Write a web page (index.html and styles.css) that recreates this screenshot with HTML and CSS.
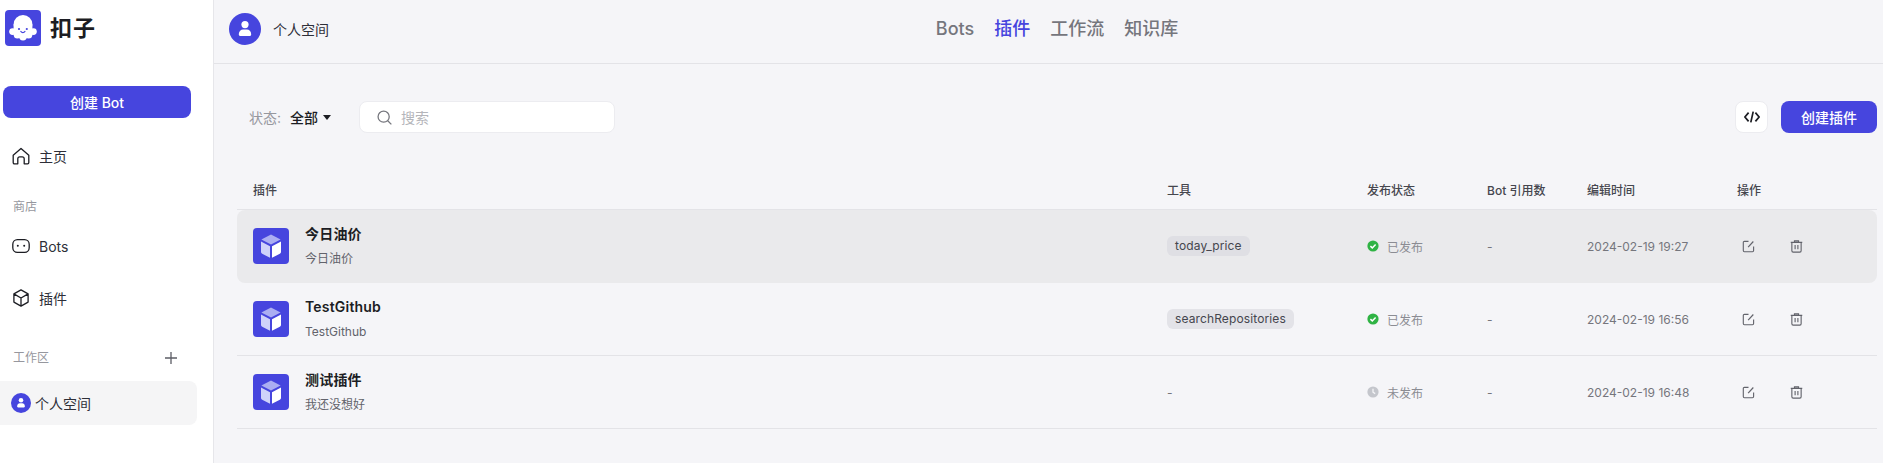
FILE: index.html
```html
<!DOCTYPE html>
<html lang="zh-CN">
<head>
<meta charset="utf-8">
<title>扣子</title>
<link rel="stylesheet" href="styles.css">
</head>
<body>
<svg class="defs" width="0" height="0" aria-hidden="true">
  <symbol id="cube" viewBox="0 0 36 36">
    <rect width="36" height="36" rx="4" fill="#4645de"/>
    <path d="M18 6.6 27.6 11.6 18 16.6 8.4 11.6Z" fill="#abaef2"/>
    <path d="M8 13.6 17 18.2V29.8L9.2 25.8C8.4 25.4 8 24.7 8 23.9Z" fill="#cfd2fa"/>
    <path d="M28 13.6 19 18.2V29.8L26.8 25.8C27.6 25.4 28 24.7 28 23.9Z" fill="#fff"/>
  </symbol>
  <symbol id="edit" viewBox="0 0 14 14">
    <path d="M7 1.5H2.6C1.9 1.5 1.4 2 1.4 2.7V11.4C1.4 12.1 1.9 12.6 2.6 12.6H11.3C12 12.6 12.5 12.1 12.5 11.4V7" fill="none" stroke="currentColor" stroke-width="1.2"/>
    <path d="M6.6 7.6 12.2 1.6" fill="none" stroke="currentColor" stroke-width="1.3"/>
  </symbol>
  <symbol id="trash" viewBox="0 0 14 14">
    <path d="M.8 2.6H13.2M4.8 2.4V1H9.2V2.4" fill="none" stroke="currentColor" stroke-width="1.2"/>
    <path d="M2 2.6V11.6C2 12.4 2.6 13 3.4 13H10.6C11.4 13 12 12.4 12 11.6V2.6" fill="none" stroke="currentColor" stroke-width="1.2"/>
    <path d="M5.5 5.4V10M8.5 5.4V10" fill="none" stroke="currentColor" stroke-width="1.2"/>
  </symbol>
  <symbol id="ok" viewBox="0 0 12 12">
    <circle cx="6" cy="6" r="5.6" fill="#2fb344"/>
    <path d="M3.4 6.1 5.3 7.9 8.6 4.4" fill="none" stroke="#fff" stroke-width="1.5"/>
  </symbol>
  <symbol id="clock" viewBox="0 0 12 12">
    <circle cx="6" cy="6" r="5.6" fill="#c4c6cc"/>
    <path d="M6 2.8V6.2L8.2 7.6" fill="none" stroke="#f5f5f8" stroke-width="1.3"/>
  </symbol>
  <symbol id="user" viewBox="0 0 32 32">
    <circle cx="16" cy="16" r="16" fill="#4645de"/>
    <circle cx="16" cy="11.6" r="3.6" fill="#fff"/>
    <path d="M9.8 21.2C9.8 18 12 16.4 14 16.4H18C20 16.4 22.2 18 22.2 21.2 22.2 22.4 21.6 23 20.6 23H11.4C10.4 23 9.8 22.4 9.8 21.2Z" fill="#fff"/>
  </symbol>
</svg>

<div class="app">
  <aside class="sidebar">
    <div class="brand">
      <svg class="brand-logo" viewBox="0 0 36 36" aria-hidden="true">
        <rect width="36" height="36" rx="4" fill="#4645de"/>
        <g fill="#fff">
          <circle cx="18" cy="14.4" r="9.4"/>
          <rect x="8.6" y="14.4" width="18.8" height="11"/>
          <circle cx="7.6" cy="21.6" r="3.4"/>
          <circle cx="28.4" cy="21.6" r="3.4"/>
          <circle cx="12.4" cy="25" r="3.6"/>
          <circle cx="18" cy="26.8" r="3.8"/>
          <circle cx="23.6" cy="25" r="3.6"/>
        </g>
        <circle cx="14" cy="19" r="1.1" fill="#4645de"/>
        <circle cx="21.8" cy="19" r="1.1" fill="#4645de"/>
        <path d="M15.8 21.4C16.8 23 19 23 20 21.4" fill="none" stroke="#4645de" stroke-width="1.1" stroke-linecap="round"/>
      </svg>
      <span class="brand-name">扣子</span>
    </div>
    <button class="btn btn-wide">创建 Bot</button>
    <a class="side-item first">
      <svg class="side-icon" viewBox="0 0 18 18"><path d="M1.2 8.2 9 1.4 16.8 8.2V15.6C16.8 16.3 16.3 16.8 15.6 16.8H12.2V11.8C12.2 10.6 11.4 9.8 10.2 9.8H7.8C6.6 9.8 5.8 10.6 5.8 11.8V16.8H2.4C1.7 16.8 1.2 16.3 1.2 15.6Z" fill="none" stroke="#1c1d23" stroke-width="1.3" stroke-linejoin="round"/></svg>
      <span>主页</span>
    </a>
    <div class="side-label store">商店</div>
    <a class="side-item">
      <svg class="side-icon" viewBox="0 0 18 18"><rect x=".8" y="2.6" width="16.4" height="12.8" rx="4.6" fill="none" stroke="#1c1d23" stroke-width="1.3"/><circle cx="5.8" cy="8.8" r="1" fill="#1c1d23"/><circle cx="12.2" cy="8.8" r="1" fill="#1c1d23"/></svg>
      <span>Bots</span>
    </a>
    <a class="side-item">
      <svg class="side-icon" viewBox="0 0 18 18"><path d="M9 .9 16.1 4.9V13.1L9 17.1 1.9 13.1V4.9ZM1.9 4.9 9 9 16.1 4.9M9 9V17.1" fill="none" stroke="#1c1d23" stroke-width="1.3" stroke-linejoin="round"/></svg>
      <span>插件</span>
    </a>
    <div class="side-label work">
      <span>工作区</span>
      <svg class="plus" viewBox="0 0 12 12"><path d="M6 0V12M0 6H12" stroke="#5c5d66" stroke-width="1.3"/></svg>
    </div>
    <a class="space-row">
      <svg class="space-avatar"><use href="#user"/></svg>
      <span>个人空间</span>
    </a>
  </aside>

  <div class="main">
    <header class="topbar">
      <div class="space">
        <svg class="top-avatar"><use href="#user"/></svg>
        <span>个人空间</span>
      </div>
      <nav class="tabs">
        <a class="tab">Bots</a>
        <a class="tab active">插件</a>
        <a class="tab">工作流</a>
        <a class="tab">知识库</a>
      </nav>
    </header>

    <section class="content">
      <div class="toolbar">
        <div class="filter">
          <span class="filter-label">状态:</span>
          <span class="filter-value">全部</span>
          <span class="caret"></span>
        </div>
        <div class="search">
          <svg class="search-icon" viewBox="0 0 14 14"><circle cx="6.2" cy="6.2" r="5.2" fill="none" stroke="#75767d" stroke-width="1.2"/><path d="M10 10 13.4 13.4" stroke="#75767d" stroke-width="1.2"/></svg>
          <span>搜索</span>
        </div>
        <div class="toolbar-right">
          <button class="code-btn" aria-label="code">
            <svg viewBox="0 0 16 12"><path d="M4.6 1.6.9 6 4.6 10.4M11.4 1.6 15.1 6 11.4 10.4M9.2 .6 6.8 11.4" fill="none" stroke="#1c1d23" stroke-width="1.7"/></svg>
          </button>
          <button class="btn btn-create">创建插件</button>
        </div>
      </div>

      <div class="table">
        <div class="row head">
          <div>插件</div><div>工具</div><div>发布状态</div><div>Bot 引用数</div><div>编辑时间</div><div>操作</div>
        </div>
        <div class="row item hover">
          <div class="plugin">
            <svg class="plugin-icon"><use href="#cube"/></svg>
            <div class="plugin-text"><div class="title">今日油价</div><div class="sub">今日油价</div></div>
          </div>
          <div><span class="tag">today_price</span></div>
          <div class="status"><svg><use href="#ok"/></svg><span>已发布</span></div>
          <div class="dash">-</div>
          <div class="time">2024-02-19 19:27</div>
          <div class="actions"><svg><use href="#edit"/></svg><svg><use href="#trash"/></svg></div>
        </div>
        <div class="row item">
          <div class="plugin">
            <svg class="plugin-icon"><use href="#cube"/></svg>
            <div class="plugin-text"><div class="title">TestGithub</div><div class="sub">TestGithub</div></div>
          </div>
          <div><span class="tag">searchRepositories</span></div>
          <div class="status"><svg><use href="#ok"/></svg><span>已发布</span></div>
          <div class="dash">-</div>
          <div class="time">2024-02-19 16:56</div>
          <div class="actions"><svg><use href="#edit"/></svg><svg><use href="#trash"/></svg></div>
        </div>
        <div class="row item">
          <div class="plugin">
            <svg class="plugin-icon"><use href="#cube"/></svg>
            <div class="plugin-text"><div class="title">测试插件</div><div class="sub">我还没想好</div></div>
          </div>
          <div class="dash">-</div>
          <div class="status off"><svg><use href="#clock"/></svg><span>未发布</span></div>
          <div class="dash">-</div>
          <div class="time">2024-02-19 16:48</div>
          <div class="actions"><svg><use href="#edit"/></svg><svg><use href="#trash"/></svg></div>
        </div>
      </div>
    </section>
  </div>
</div>
</body>
</html>
```
FILE: styles.css
```css
* { box-sizing: border-box; }
html, body { margin: 0; height: 100%; overflow: hidden; }
body {
  font-family: Inter, "Noto Sans CJK SC", sans-serif;
  color: #1c1d23;
  background: #f5f5f8;
}
.defs { position: absolute; }
button { font-family: inherit; border: 0; padding: 0; }
.app { display: flex; height: 463px; }

.sidebar {
  flex: 0 0 214px;
  background: #fff;
  border-right: 1px solid #e6e6ea;
  display: flex;
  flex-direction: column;
}
.brand { display: flex; align-items: center; height: 36px; margin: 10px 0 0 5px; gap: 9px; }
.brand-logo { width: 36px; height: 36px; }
.brand-name { font-size: 22px; line-height: 30px; font-weight: 700; letter-spacing: 1px; color: #1c1d23; }
.btn { background: #4645de; color: #fff; font-weight: 500; font-size: 14px; border-radius: 8px; height: 32px; }
.btn-wide { width: 188px; margin: 40px 0 0 3px; }
.side-item { display: flex; align-items: center; height: 20px; padding-left: 12px; gap: 9px; font-size: 14px; color: #2e2f38; margin-bottom: 32px; }
.side-item.first { margin-top: 28px; margin-bottom: 0; }
.side-icon { width: 18px; height: 18px; }
.side-label { font-size: 12px; line-height: 16px; color: #96979e; padding-left: 13px; }
.side-label.store { margin: 33px 0 21px; }
.side-label.work { display: flex; align-items: center; justify-content: space-between; padding-right: 36px; margin: 10px 0 15px; }
.plus { width: 12px; height: 12px; }
.space-row { display: flex; align-items: center; width: 197px; height: 44px; background: #f5f5f6; border-radius: 0 8px 8px 0; padding-left: 11px; gap: 4px; font-size: 14px; color: #2e2f38; }
.space-avatar { width: 20px; height: 20px; }

.main { flex: 1; min-width: 0; display: flex; flex-direction: column; }
.topbar { position: relative; flex: 0 0 64px; display: flex; align-items: center; justify-content: center; border-bottom: 1px solid #e3e3e7; }
.space { position: absolute; left: 15px; top: 13px; display: flex; align-items: center; gap: 12px; font-size: 14px; color: #2e2f38; }
.top-avatar { width: 32px; height: 32px; }
.tabs { display: flex; gap: 20px; font-size: 18px; line-height: 24px; font-weight: 500; color: #75767d; margin: -5px 0 0 17px; }
.tab.active { color: #4645de; }

.content { padding: 37px 6px 0 23px; }
.toolbar { display: flex; align-items: center; height: 32px; }
.filter { display: flex; align-items: center; font-size: 14px; width: 122px; padding-left: 12px; }
.filter-label { color: #96979e; width: 41px; }
.filter-value { color: #1c1d23; font-weight: 500; }
.caret { margin-left: 5px; width: 0; height: 0; border-left: 4px solid transparent; border-right: 4px solid transparent; border-top: 5px solid #1c1d23; }
.search { width: 256px; height: 32px; display: flex; align-items: center; gap: 9px; padding-left: 17px; background: #fff; border: 1px solid #ececf0; border-radius: 8px; font-size: 14px; color: #b4b5ba; }
.search-icon { width: 15px; height: 15px; }
.toolbar-right { margin-left: auto; display: flex; align-items: center; gap: 13px; }
.code-btn { width: 33px; height: 32px; background: #fff; border: 1px solid #ececf0; border-radius: 8px; display: flex; align-items: center; justify-content: center; }
.code-btn svg { width: 16px; height: 12px; }
.btn-create { width: 96px; }

.table { margin-top: 37px; }
.row { display: grid; grid-template-columns: 914px 200px 120px 100px 150px 140px; align-items: center; padding-left: 16px; }
.head { height: 40px; font-size: 12px; font-weight: 500; color: #45464e; border-bottom: 1px solid #e3e3e7; }
.item { height: 73px; border-bottom: 1px solid #e3e3e7; font-size: 12px; }
.item.hover { background: #eaeaec; border-bottom-color: transparent; border-radius: 8px; }
.plugin { display: flex; align-items: center; gap: 16px; }
.plugin-icon { width: 36px; height: 36px; }
.plugin-text { padding-bottom: 2px; }
.title { font-size: 14px; font-weight: 600; line-height: 20px; letter-spacing: .2px; color: #1c1d23; }
.sub { font-size: 12px; line-height: 16px; margin-top: 7px; color: #62636b; }
.tag { display: inline-block; background: #e3e3e8; border-radius: 6px; height: 20px; line-height: 20px; padding: 0 8px; color: #45464e; font-size: 12px; letter-spacing: .12px; }
.item.hover .tag { background: #dfdfe4; }
.status { display: flex; align-items: center; gap: 8px; color: #8b8c93; font-size: 12px; }
.status svg { width: 12px; height: 12px; }
.dash { color: #75767d; }
.time { color: #75767d; font-size: 12px; }
.actions { display: flex; gap: 35px; padding-left: 5px; color: #62636b; }
.actions svg { width: 13px; height: 13px; }
```
